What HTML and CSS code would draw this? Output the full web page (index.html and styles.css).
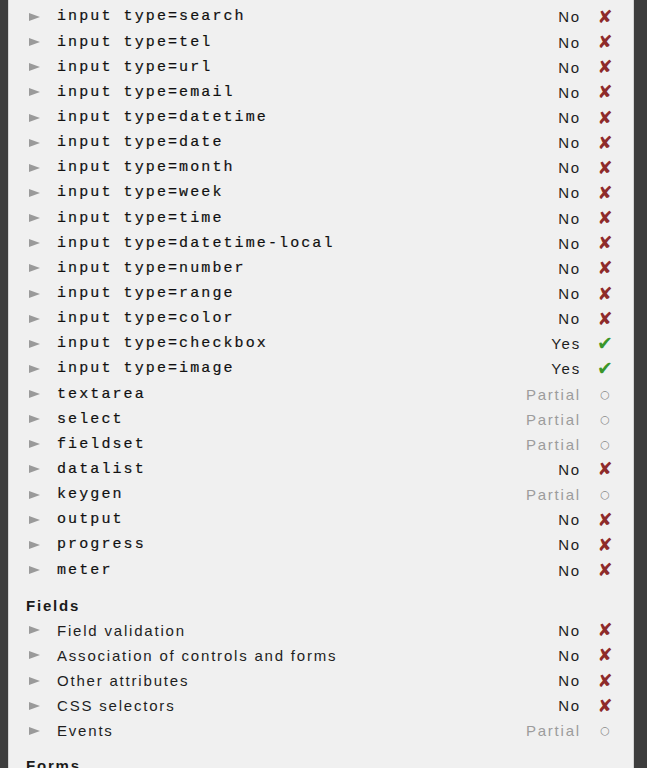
FILE: index.html
```html
<!DOCTYPE html>
<html lang="en">
<head>
  <meta charset="UTF-8">
  <title>Form support</title>
  <link rel="stylesheet" href="styles.css">
</head>
<body>
  <div class="panel">

    <!-- elements -->
    <ul class="features">
      <li class="row"><span class="arrow"></span><code class="name">input type=search</code><span class="status">No</span><span class="mark no">&#x2718;</span></li>
      <li class="row"><span class="arrow"></span><code class="name">input type=tel</code><span class="status">No</span><span class="mark no">&#x2718;</span></li>
      <li class="row"><span class="arrow"></span><code class="name">input type=url</code><span class="status">No</span><span class="mark no">&#x2718;</span></li>
      <li class="row"><span class="arrow"></span><code class="name">input type=email</code><span class="status">No</span><span class="mark no">&#x2718;</span></li>
      <li class="row"><span class="arrow"></span><code class="name">input type=datetime</code><span class="status">No</span><span class="mark no">&#x2718;</span></li>
      <li class="row"><span class="arrow"></span><code class="name">input type=date</code><span class="status">No</span><span class="mark no">&#x2718;</span></li>
      <li class="row"><span class="arrow"></span><code class="name">input type=month</code><span class="status">No</span><span class="mark no">&#x2718;</span></li>
      <li class="row"><span class="arrow"></span><code class="name">input type=week</code><span class="status">No</span><span class="mark no">&#x2718;</span></li>
      <li class="row"><span class="arrow"></span><code class="name">input type=time</code><span class="status">No</span><span class="mark no">&#x2718;</span></li>
      <li class="row"><span class="arrow"></span><code class="name">input type=datetime-local</code><span class="status">No</span><span class="mark no">&#x2718;</span></li>
      <li class="row"><span class="arrow"></span><code class="name">input type=number</code><span class="status">No</span><span class="mark no">&#x2718;</span></li>
      <li class="row"><span class="arrow"></span><code class="name">input type=range</code><span class="status">No</span><span class="mark no">&#x2718;</span></li>
      <li class="row"><span class="arrow"></span><code class="name">input type=color</code><span class="status">No</span><span class="mark no">&#x2718;</span></li>
      <li class="row"><span class="arrow"></span><code class="name">input type=checkbox</code><span class="status">Yes</span><span class="mark yes">&#x2714;</span></li>
      <li class="row"><span class="arrow"></span><code class="name">input type=image</code><span class="status">Yes</span><span class="mark yes">&#x2714;</span></li>
      <li class="row"><span class="arrow"></span><code class="name">textarea</code><span class="status partial">Partial</span><span class="mark part">&#x25CB;</span></li>
      <li class="row"><span class="arrow"></span><code class="name">select</code><span class="status partial">Partial</span><span class="mark part">&#x25CB;</span></li>
      <li class="row"><span class="arrow"></span><code class="name">fieldset</code><span class="status partial">Partial</span><span class="mark part">&#x25CB;</span></li>
      <li class="row"><span class="arrow"></span><code class="name">datalist</code><span class="status">No</span><span class="mark no">&#x2718;</span></li>
      <li class="row"><span class="arrow"></span><code class="name">keygen</code><span class="status partial">Partial</span><span class="mark part">&#x25CB;</span></li>
      <li class="row"><span class="arrow"></span><code class="name">output</code><span class="status">No</span><span class="mark no">&#x2718;</span></li>
      <li class="row"><span class="arrow"></span><code class="name">progress</code><span class="status">No</span><span class="mark no">&#x2718;</span></li>
      <li class="row"><span class="arrow"></span><code class="name">meter</code><span class="status">No</span><span class="mark no">&#x2718;</span></li>
    </ul>

    <!-- fields -->
    <h3 class="group">Fields</h3>
    <ul class="features">
      <li class="row"><span class="arrow"></span><span class="name">Field validation</span><span class="status">No</span><span class="mark no">&#x2718;</span></li>
      <li class="row"><span class="arrow"></span><span class="name">Association of controls and forms</span><span class="status">No</span><span class="mark no">&#x2718;</span></li>
      <li class="row"><span class="arrow"></span><span class="name">Other attributes</span><span class="status">No</span><span class="mark no">&#x2718;</span></li>
      <li class="row"><span class="arrow"></span><span class="name">CSS selectors</span><span class="status">No</span><span class="mark no">&#x2718;</span></li>
      <li class="row"><span class="arrow"></span><span class="name">Events</span><span class="status partial">Partial</span><span class="mark part">&#x25CB;</span></li>
    </ul>

    <!-- forms -->
    <h3 class="group">Forms</h3>

  </div>
</body>
</html>
```

FILE: styles.css
```css
/* ---------- base ---------- */
* {
  box-sizing: border-box;
  margin: 0;
  padding: 0;
}
html, body {
  height: 100%;
  overflow: hidden;
}
body {
  background: #3d3d3d;
  font-family: "Liberation Sans", Arial, sans-serif;
  font-size: 15px;
  letter-spacing: 1.8px;
  color: #1e1e1e;
}

/* ---------- panel ---------- */
.panel {
  margin: 0 13px 0 8px;
  min-height: 100%;
  background: #f0f0f0;
  border-left: 1px solid #d4d4d4;
  border-right: 1px solid #d4d4d4;
  padding: 4.4px 14px 0 16px;
}

/* ---------- rows ---------- */
.features {
  list-style: none;
}
.row {
  display: grid;
  grid-template-columns: 32px 1fr auto 28px;
  align-items: center;
  height: 25.15px;
}
.row .arrow {
  width: 0;
  height: 0;
  margin-left: 4px;
  border-left: 11px solid #9a9a9a;
  border-top: 4.5px solid transparent;
  border-bottom: 4.5px solid transparent;
}
.row code.name {
  font-family: "Liberation Mono", "Courier New", monospace;
  font-size: 15px;
  letter-spacing: 2.1px;
  color: #111;
  -webkit-text-stroke: 0.2px #111;
}
.row .status {
  text-align: right;
  margin-right: 10px;
}
.row .status.partial {
  color: #9c9c9c;
}

/* ---------- marks ---------- */
.mark {
  font-family: "DejaVu Sans", sans-serif;
  letter-spacing: 0;
  text-align: center;
  line-height: 1;
}
.mark.no {
  color: #8e2b2b;
  font-size: 18px;
}
.mark.yes {
  color: #3a962a;
  font-size: 19px;
}
.mark.part {
  color: #8a8a8a;
  font-size: 11px;
}

/* ---------- group headings ---------- */
.group {
  font-size: 15px;
  font-weight: bold;
  color: #1a1a1a;
  height: 25.15px;
  line-height: 25.15px;
  margin-top: 10px;
  padding-left: 1px;
}
```
